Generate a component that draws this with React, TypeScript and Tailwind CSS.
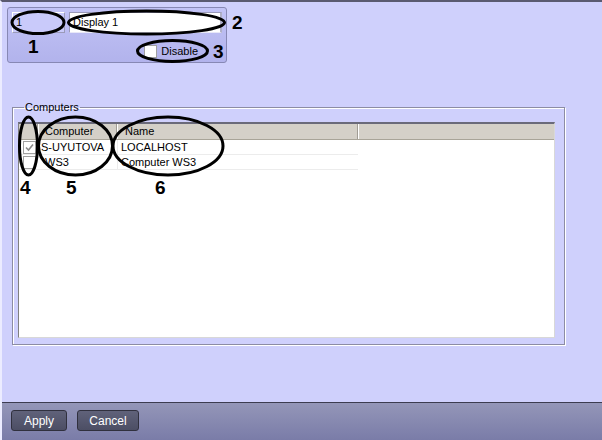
import React from "react";

const font = { fontFamily: '"Liberation Sans", Arial, sans-serif' };

const rows = [
  { checked: true, computer: "S-UYUTOVA", name: "LOCALHOST" },
  { checked: false, computer: "WS3", name: "Computer WS3" },
];

function Check({ checked }: { checked: boolean }) {
  return (
    <span className="flex h-[13px] w-[13px] items-center justify-center border border-[#a0a0a0] bg-white">
      {checked && (
        <svg width="9" height="9" viewBox="0 0 9 9">
          <path d="M1 4.5 L3.5 7 L8 1.5" fill="none" stroke="#8a8a8a" strokeWidth="1.6" />
        </svg>
      )}
    </span>
  );
}

function Badge({ n, className }: { n: string; className: string }) {
  return (
    <span className={`absolute text-[19px] font-bold leading-none text-black ${className}`} style={font}>
      {n}
    </span>
  );
}

export default function App() {
  return (
    <div
      className="relative flex h-[440px] w-[602px] flex-col overflow-hidden border-t-2 border-l-2 border-t-[#5a5a70] border-l-[#ececff] bg-[#cfd0fc] text-[11px] text-black"
      style={font}
    >
      <div className="flex-1 pt-[5px]">
        {/* top panel */}
        <div className="ml-[5px] flex h-[56px] w-[220px] flex-col rounded-[3px] border border-[#8788b4] bg-gradient-to-b from-[#c2c3f6] to-[#b2b3ec] px-[4px] pt-[4px]">
          <div className="flex gap-[4px]">
            <div className="flex h-[21px] w-[53px] items-center border-t border-l border-white border-r border-b border-r-[#9a9ab8] border-b-[#9a9ab8] bg-[#c9cafa] px-[3px]">
              1
            </div>
            <div className="flex h-[21px] w-[153px] items-center border-t border-l border-[#9a9ab8] border-r-2 border-b border-r-[#b0b0c8] border-b-[#e8e8f8] bg-white px-[3px]">
              Display 1
            </div>
          </div>
          <div className="mt-[10px] flex items-center justify-end gap-[4px] pr-[24px]">
            <Check checked={false} />
            <span>Disable</span>
          </div>
        </div>

        {/* group box */}
        <fieldset className="ml-[10px] mt-[38px] h-[244px] w-[553px] border border-[#8c8ca4] px-[5px] pb-[7px] pt-0 shadow-[inset_1px_1px_0_#ffffff,1px_1px_0_#ffffff]">
          <legend className="ml-[6px] px-[1px] text-[11px] leading-[12px]">Computers</legend>
          <div className="mt-[9px] h-[216px] w-[537px] border-t-2 border-l border-r border-b border-t-[#6a6a7a] border-l-[#808080] border-r-[#d8d8d8] border-b-[#d8d8d8] bg-white">
            <div className="flex h-[16px] border-b border-[#a8a498] bg-[#d4d0c8] leading-[15px]">
              <div className="w-[19px] border-r border-[#a09c94] shadow-[1px_0_0_#ffffff]" />
              <div className="w-[79px] border-r border-[#a09c94] pl-[7px] shadow-[1px_0_0_#ffffff]">Computer</div>
              <div className="w-[241px] border-r border-[#a09c94] pl-[8px] shadow-[1px_0_0_#ffffff]">Name</div>
              <div className="flex-1" />
            </div>
            {rows.map((r) => (
              <div key={r.computer} className="flex h-[15px] w-[339px] items-center border-b border-[#ececec] text-[11px]">
                <div className="flex w-[19px] justify-center pl-[1px]">
                  <Check checked={r.checked} />
                </div>
                <div className="w-[79px] pl-[3px]">{r.computer === "WS3" ? <span className="pl-[4px]">WS3</span> : r.computer}</div>
                <div className="h-full w-[241px] border-l border-[#ececec] pl-[3px] leading-[14px]">{r.name}</div>
              </div>
            ))}
          </div>
        </fieldset>
      </div>

      {/* footer */}
      <div className="flex h-[38px] items-center gap-[10px] border-t border-[#3c3c50] bg-gradient-to-b from-[#9496b8] to-[#7a7ca8] pl-[9px] pb-[2px]">
        <button className="h-[21px] w-[56px] rounded-[3px] border border-[#30303e] bg-gradient-to-b from-[#60627a] to-[#4c4e64] text-[12px] text-white">
          Apply
        </button>
        <button className="h-[21px] w-[62px] rounded-[3px] border border-[#30303e] bg-gradient-to-b from-[#60627a] to-[#4c4e64] text-[12px] text-white">
          Cancel
        </button>
      </div>

      {/* annotations */}
      <svg className="pointer-events-none absolute left-[-2px] top-[-2px]" width="602" height="440">
        <g fill="none" stroke="#000" strokeWidth="3">
          <ellipse cx="38" cy="22.5" rx="26" ry="11" />
          <ellipse cx="146.5" cy="22.5" rx="78" ry="11.5" />
          <ellipse cx="172.5" cy="51" rx="35" ry="10.5" />
          <ellipse cx="28.5" cy="146" rx="9" ry="29" />
          <ellipse cx="75.5" cy="146" rx="37" ry="29" />
          <ellipse cx="168" cy="146" rx="55" ry="29" />
        </g>
      </svg>
      <Badge n="1" className="left-[26px] top-[35px]" />
      <Badge n="2" className="left-[230px] top-[11px]" />
      <Badge n="3" className="left-[211px] top-[40px]" />
      <Badge n="4" className="left-[18px] top-[176px]" />
      <Badge n="5" className="left-[64px] top-[176px]" />
      <Badge n="6" className="left-[153px] top-[176px]" />
    </div>
  );
}
